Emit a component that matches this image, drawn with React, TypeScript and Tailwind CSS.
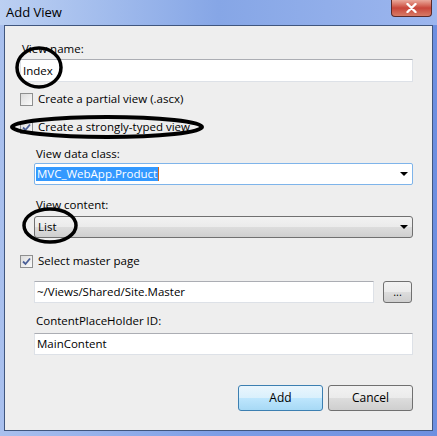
import { FC, ReactNode } from "react";

const font = { fontFamily: '"Open Sans", "Noto Sans", sans-serif' };

const CheckBox: FC<{ checked?: boolean; label: string }> = ({ checked, label }) => (
  <div className="flex items-center h-[16px]">
    <div className="w-[13px] h-[13px] border border-[#8e8f8f] bg-gradient-to-br from-[#dcdcdc] to-[#fbfbfb] flex items-center justify-center">
      {checked && (
        <svg width="9" height="9" viewBox="0 0 9 9">
          <path d="M1 4.5 L3.5 7 L8 1.5" fill="none" stroke="#4a5f97" strokeWidth="1.8" />
        </svg>
      )}
    </div>
    <span className="ml-[5px] text-[11.5px] leading-[16px] text-black">{label}</span>
  </div>
);

const Label: FC<{ children: ReactNode; className?: string }> = ({ children, className }) => (
  <div className={`h-[16px] text-[11.5px] leading-[16px] text-black ${className ?? ""}`}>{children}</div>
);

const TextBox: FC<{ value: string; className?: string }> = ({ value, className }) => (
  <div
    className={`bg-white border border-[#dde1e7] border-t-[#abadb3] flex items-center pl-[2px] text-[11.5px] text-black ${className ?? ""}`}
  >
    {value}
  </div>
);

const Arrow = () => (
  <svg width="8" height="4" viewBox="0 0 8 4" className="mr-[4px]">
    <path d="M0 0 H8 L4 4 Z" fill="#000" />
  </svg>
);

export default function App() {
  return (
    <div
      className="relative w-[437px] h-[436px] bg-gradient-to-r from-[#a9c0ee] via-[#7d9ee6] to-[#6d8fe0] overflow-hidden"
      style={font}
    >
      {/* title bar */}
      <div className="h-[25px] flex items-start justify-between bg-gradient-to-r from-[#bcd0f2] via-[#86a6e6] to-[#9cb6ee]">
        <span className="ml-[6px] mt-[4px] text-[13px] leading-[16px] text-black">Add View</span>
        <div className="mr-[5px] w-[41px] h-[17px] rounded-b-[4px] border border-t-0 border-[#5a2a2a] bg-gradient-to-b from-[#e9a99c] via-[#c8453a] to-[#d77a66] flex items-center justify-center">
          <svg width="11" height="10" viewBox="0 0 11 10">
            <path d="M1.5 1 L9.5 9 M9.5 1 L1.5 9" stroke="#fff" strokeWidth="2.4" strokeLinecap="round" />
          </svg>
        </div>
      </div>

      {/* client area */}
      <div className="ml-[4px] w-[429px] h-[406px] border border-[#40567e] bg-[#eeeeee] pl-[15px] pt-[15px]">
        <Label className="ml-[2px]">View name:</Label>
        <TextBox value="Index" className="mt-[2px] w-[393px] h-[23px]" />

        <div className="mt-[9px]">
          <CheckBox label="Create a partial view (.ascx)" />
        </div>
        <div className="mt-[12px]">
          <CheckBox checked label="Create a strongly-typed view" />
        </div>

        <div className="ml-[14px]">
          <Label className="mt-[11px] ml-[2px]">View data class:</Label>
          <div className="mt-[1px] w-[379px] h-[22px] bg-white border border-[#7eb4ea] rounded-[2px] flex items-center justify-between pl-[1px]">
            <span className="bg-[#3399ff] text-white text-[11.5px] leading-[14px] px-[1px] border-r border-[#d2691e]">
              MVC_WebApp.Product
            </span>
            <Arrow />
          </div>

          <Label className="mt-[12px] ml-[2px]">View content:</Label>
          <div className="mt-[3px] w-[379px] h-[22px] border border-[#707070] rounded-[3px] bg-[linear-gradient(to_bottom,#f2f2f2_0%,#ebebeb_50%,#dddddd_50%,#cfcfcf_100%)] flex items-center justify-between pl-[3px]">
            <span className="text-[11.5px] text-black">List</span>
            <Arrow />
          </div>
        </div>

        <div className="mt-[15px]">
          <CheckBox checked label="Select master page" />
        </div>

        <div className="ml-[14px]">
          <div className="mt-[12px] flex items-center">
            <TextBox value="~/Views/Shared/Site.Master" className="w-[340px] h-[22px]" />
            <div className="ml-[9px] w-[29px] h-[22px] border border-[#707070] rounded-[3px] bg-[linear-gradient(to_bottom,#f2f2f2_0%,#ebebeb_50%,#dddddd_50%,#cfcfcf_100%)] flex items-center justify-center text-[11px] leading-[10px] text-black">
              ...
            </div>
          </div>

          <Label className="mt-[10px] ml-[2px]">ContentPlaceHolder ID:</Label>
          <TextBox value="MainContent" className="mt-[4px] w-[379px] h-[22px]" />

          <div className="mt-[30px] w-[379px] flex justify-end gap-[5px]">
            <button className="w-[85px] h-[26px] border border-[#3c7fb1] rounded-[3px] bg-[linear-gradient(to_bottom,#eaf6fd_0%,#d9f0fc_50%,#bee6fd_50%,#a7d9f5_100%)] text-[12px] text-black">
              Add
            </button>
            <button className="w-[85px] h-[26px] border border-[#707070] rounded-[3px] bg-[linear-gradient(to_bottom,#f2f2f2_0%,#ebebeb_50%,#dddddd_50%,#cfcfcf_100%)] text-[12px] text-black">
              Cancel
            </button>
          </div>
        </div>
      </div>

      {/* hand-drawn marks */}
      <svg className="absolute left-0 top-0 pointer-events-none" width="437" height="436">
        <ellipse cx="39" cy="67.5" rx="22" ry="19.5" fill="none" stroke="#000" strokeWidth="3.5" />
        <ellipse cx="107" cy="127" rx="95" ry="10" fill="none" stroke="#000" strokeWidth="4" />
        <ellipse cx="50" cy="225.5" rx="26" ry="16.5" fill="none" stroke="#000" strokeWidth="3.5" />
      </svg>
    </div>
  );
}
